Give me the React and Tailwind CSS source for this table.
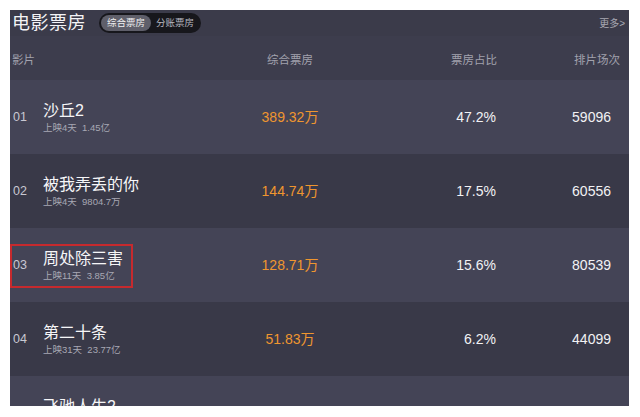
const rows = [
  { no: '01', name: '沙丘2', sub: '上映4天  1.45亿', box: '389.32万', pct: '47.2%', shows: '59096', light: true },
  { no: '02', name: '被我弄丢的你', sub: '上映4天  9804.7万', box: '144.74万', pct: '17.5%', shows: '60556' },
  { no: '03', name: '周处除三害', sub: '上映11天  3.85亿', box: '128.71万', pct: '15.6%', shows: '80539', light: true, marked: true },
  { no: '04', name: '第二十条', sub: '上映31天  23.77亿', box: '51.83万', pct: '6.2%', shows: '44099' },
  { no: '05', name: '飞驰人生2', sub: '上映31天  33.01亿', box: '44.36万', pct: '5.3%', shows: '40862', light: true },
];

const font = { fontFamily: '"Liberation Sans", "Noto Sans CJK SC", sans-serif' };

export default function App() {
  return (
    <div className="w-[640px] h-[417px] bg-white pt-[10px] pl-[10px]" style={font}>
      <div className="w-[619px] h-[396px] overflow-hidden bg-[#3b3b4a] flex flex-col">
        {/* title bar */}
        <div className="h-[26px] shrink-0 flex items-center pl-[2px] pr-[4px]">
          <span className="text-[18px] leading-none text-[#f4f4f6] tracking-[0.5px]">电影票房</span>
          <div className="ml-[13px] h-[20px] rounded-full bg-[#17171c] flex items-center p-[2px] pr-[7px]">
            <span className="h-[16px] px-[6px] rounded-full bg-[#5f5f6a] text-[9.5px] leading-[16px] text-[#f0f0f0]">综合票房</span>
            <span className="ml-[5px] text-[9.5px] text-[#b8b8c0]">分账票房</span>
          </div>
          <span className="ml-auto text-[10px] text-[#a8a8b2]">更多&gt;</span>
        </div>

        {/* header */}
        <div className="h-[44px] shrink-0 pt-[6px] grid grid-cols-[230px_100px_157px_123px] items-center text-[11.5px] text-[#a2a2ae] bg-[#3d3d4d]">
          <span className="pl-[2px]">影片</span>
          <span className="text-center">综合票房</span>
          <span className="text-right">票房占比</span>
          <span className="text-right">排片场次</span>
        </div>

        {rows.map(r => (
          <div
            key={r.no}
            className={`h-[74px] shrink-0 grid grid-cols-[230px_100px_157px_123px] items-center ${r.light ? 'bg-[#444456]' : 'bg-[#393948]'}`}
          >
            <div className="relative h-full flex items-center">
              {r.marked && <div className="absolute left-0 top-[16px] w-[123px] h-[44px] border-2 border-[#c62a2e]" />}
              <span className="w-[33px] pl-[3px] text-[12.5px] text-[#c8c8d2]">{r.no}</span>
              <div className="flex flex-col">
                <span className="text-[16px] leading-[20px] text-[#f6f6f8]">{r.name}</span>
                <span className="text-[9.5px] leading-[13px] text-[#a8a8b4] whitespace-pre">{r.sub}</span>
              </div>
            </div>
            <span className="text-center text-[14px] text-[#ef962f]">{r.box}</span>
            <span className="text-right text-[14px] text-[#f2f2f4] pr-[1px]">{r.pct}</span>
            <span className="text-right text-[14px] text-[#f2f2f4] pr-[9px]">{r.shows}</span>
          </div>
        ))}
      </div>
    </div>
  );
}
